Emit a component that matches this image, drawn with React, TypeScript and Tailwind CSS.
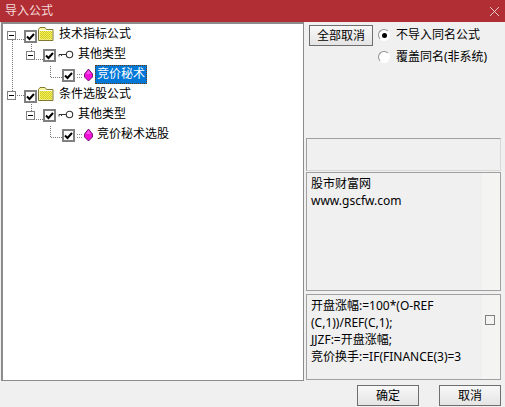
const font = { fontFamily: '"Noto Sans", "Noto Sans CJK SC", sans-serif' };

function Check() {
  return (
    <span className="flex h-[13px] w-[13px] shrink-0 items-center justify-center border-2 border-[#808080] bg-white">
      <svg width="9" height="9" viewBox="0 0 9 9"><path d="M1 4.5 L3.5 7 L8 2" fill="none" stroke="#000" strokeWidth="2" /></svg>
    </span>
  );
}
function Exp() {
  return (
    <span className="relative h-[9px] w-[9px] shrink-0 border border-[#808080] bg-white">
      <span className="absolute left-[1px] top-[3px] h-px w-[5px] bg-black" />
    </span>
  );
}
function Folder({ id }: { id: string }) {
  return (
    <svg width="16" height="14" viewBox="0 0 16 14" className="shrink-0">
      <defs>
        <pattern id={id} width="2" height="2" patternUnits="userSpaceOnUse">
          <rect width="2" height="2" fill="#ffff40" />
          <rect width="1" height="1" fill="#c8c040" />
          <rect x="1" y="1" width="1" height="1" fill="#c8c040" />
        </pattern>
      </defs>
      <path d="M0.5 13.5 V2.5 L2 0.5 H7 L8.5 2.5 H15 V13.5 Z" fill="#f8f4a0" stroke="#807830" />
      <rect x="2" y="4" width="12" height="8.5" fill={`url(#${id})`} />
      <path d="M1.5 3.5 H14" stroke="#fff" />
    </svg>
  );
}
function Key() {
  return (
    <svg width="16" height="9" viewBox="0 0 16 9" className="shrink-0">
      <circle cx="11.5" cy="4.5" r="3.2" fill="#fff" stroke="#333" strokeWidth="1.1" />
      <path d="M8 4.5 H1 V6.5 M3.5 4.5 V6" fill="none" stroke="#333" />
    </svg>
  );
}
function Gem() {
  return (
    <svg width="16" height="14" viewBox="0 0 16 14" className="shrink-0">
      <path d="M0 6.5 H6 M0 9.5 H6" stroke="#888" strokeDasharray="1 1" />
      <path d="M11.5 1 L15.5 6 V9 L11.5 13 L7.5 9 V6 Z" fill="#f010d8" stroke="#500050" strokeWidth="0.8" />
      <path d="M11.5 2 L14 6 H9 Z" fill="#ff50f0" />
    </svg>
  );
}
function Row({ pl, children }: { pl: string; children: React.ReactNode }) {
  return <div className={`flex h-5 items-center ${pl}`}>{children}</div>;
}
function Group({ id, title, leaf, selected }: { id: string; title: string; leaf: string; selected?: boolean }) {
  return (
    <>
      <Row pl="pl-[5px]">
        <Exp />
        <span className="ml-[8px] mt-[3px]"><Check /></span>
        <span className="ml-[1px] -mt-[3px]"><Folder id={id} /></span>
        <span className="ml-[5px] -mt-[3px] text-black">{title}</span>
      </Row>
      <Row pl="pl-[24px]">
        <Exp />
        <span className="ml-[8px] mt-[1px]"><Check /></span>
        <span className="ml-[2px] -mt-[2px]"><Key /></span>
        <span className="ml-[4px] -mt-[2px] text-black">其他类型</span>
      </Row>
      <Row pl="pl-[60px]">
        <Check />
        <span className="ml-[2px] -mt-[1px]"><Gem /></span>
        {selected ? (
          <span className="ml-[2px] -mt-[2px] flex h-[19px] items-center border border-dotted border-[#6a3a08] bg-[#0078d7] px-px text-white">{leaf}</span>
        ) : (
          <span className="ml-[4px] -mt-[3px] text-black">{leaf}</span>
        )}
      </Row>
    </>
  );
}
function Btn({ children, className }: { children: React.ReactNode; className: string }) {
  return (
    <button className={`flex h-[21px] items-center justify-center border border-[#6e6e6e] bg-gradient-to-b from-[#f8f8f8] to-[#e4e4e4] text-black ${className}`}>
      {children}
    </button>
  );
}
function Radio({ on, label }: { on?: boolean; label: string }) {
  return (
    <div className="flex h-[22px] items-center">
      <span className="flex h-[12px] w-[12px] items-center justify-center rounded-full border border-[#909090] border-b-white border-r-white bg-white">
        {on && <span className="h-[5px] w-[5px] rounded-full bg-black" />}
      </span>
      <span className="ml-[6px] text-black">{label}</span>
    </div>
  );
}

export default function App() {
  return (
    <div style={font} className="flex h-[407px] w-[505px] flex-col overflow-hidden bg-[#f0f0f0] text-[12px]">
      <div className="flex h-[22px] shrink-0 items-center justify-between bg-[#b22e35] px-[5px] text-white">
        <span className="text-[#f4dcdc]">导入公式</span>
        <svg width="11" height="11" viewBox="0 0 11 11"><path d="M1 1 L10 10 M10 1 L1 10" stroke="#e8c8c8" strokeWidth="1" /></svg>
      </div>
      <div className="flex min-h-0 flex-1">
        <div className="relative ml-[1px] w-[303px] shrink-0 border border-t-[2px] border-l-[2px] border-[#8c8c8c] bg-white pt-[1px]">
          <svg className="absolute -left-px top-0" width="100" height="150">
            <g stroke="#777" strokeDasharray="1 1" fill="none">
              <path d="M10.5 16 V70" />
              <path d="M15 15.5 H24" />
              <path d="M29.5 20 V31" />
              <path d="M34 35.5 H43" />
              <path d="M48.5 42 V53.5 H61" />
              <path d="M15 71.5 H24" />
              <path d="M29.5 76 V91" />
              <path d="M34 95.5 H43" />
              <path d="M48.5 102 V113.5 H61" />
            </g>
          </svg>
          <div className="relative -ml-px">
            <Group id="f1" title="技术指标公式" leaf="竞价秘术" selected />
            <Group id="f2" title="条件选股公式" leaf="竞价秘术选股" />
          </div>
        </div>
        <div className="flex min-w-0 flex-1 flex-col pl-[2px] pr-[4px]">
          <div className="flex h-[116px] shrink-0 items-start pl-[3px] pt-[3px]">
            <Btn className="w-[64px]">全部取消</Btn>
            <div className="ml-[5px] -mt-px flex flex-col">
              <Radio on label="不导入同名公式" />
              <Radio label="覆盖同名(非系统)" />
            </div>
          </div>
          <div className="h-[33px] shrink-0 border border-[#a0a0a0] border-b-[#d8d8d8] border-r-[#d8d8d8]" />
          <div className="relative mt-[1px] h-[119px] shrink-0 border border-[#a0a0a0] px-[4px] py-[2px] leading-[17px] text-black">
            <span className="absolute inset-y-0 right-0 w-[18px] bg-[#f4f4f2]" />
            <div className="relative">股市财富网</div>
            <div className="relative">www.gscfw.com</div>
          </div>
          <div className="relative mt-[3px] h-[86px] shrink-0 border border-[#a0a0a0] py-[2px] pl-[4px] pr-[20px] leading-[17px] text-black">
            <span className="absolute inset-y-0 right-0 w-[18px] bg-[#f4f4f2]" />
            <div className="relative">
              开盘涨幅:=100*(O-REF (C,1))/REF(C,1);<br />JJZF:=开盘涨幅;<br /><span className="whitespace-nowrap">竞价换手:=IF(FINANCE(3)=3</span>
            </div>
            <span className="absolute right-[5px] top-[20px] h-[10px] w-[10px] border border-[#808080] bg-[#f4f4f4]" />
          </div>
        </div>
      </div>
      <div className="flex h-[26px] shrink-0 justify-end gap-[20px] pr-[4px] pt-[4px]">
        <Btn className="w-[62px]">确定</Btn>
        <Btn className="w-[62px]">取消</Btn>
      </div>
    </div>
  );
}
